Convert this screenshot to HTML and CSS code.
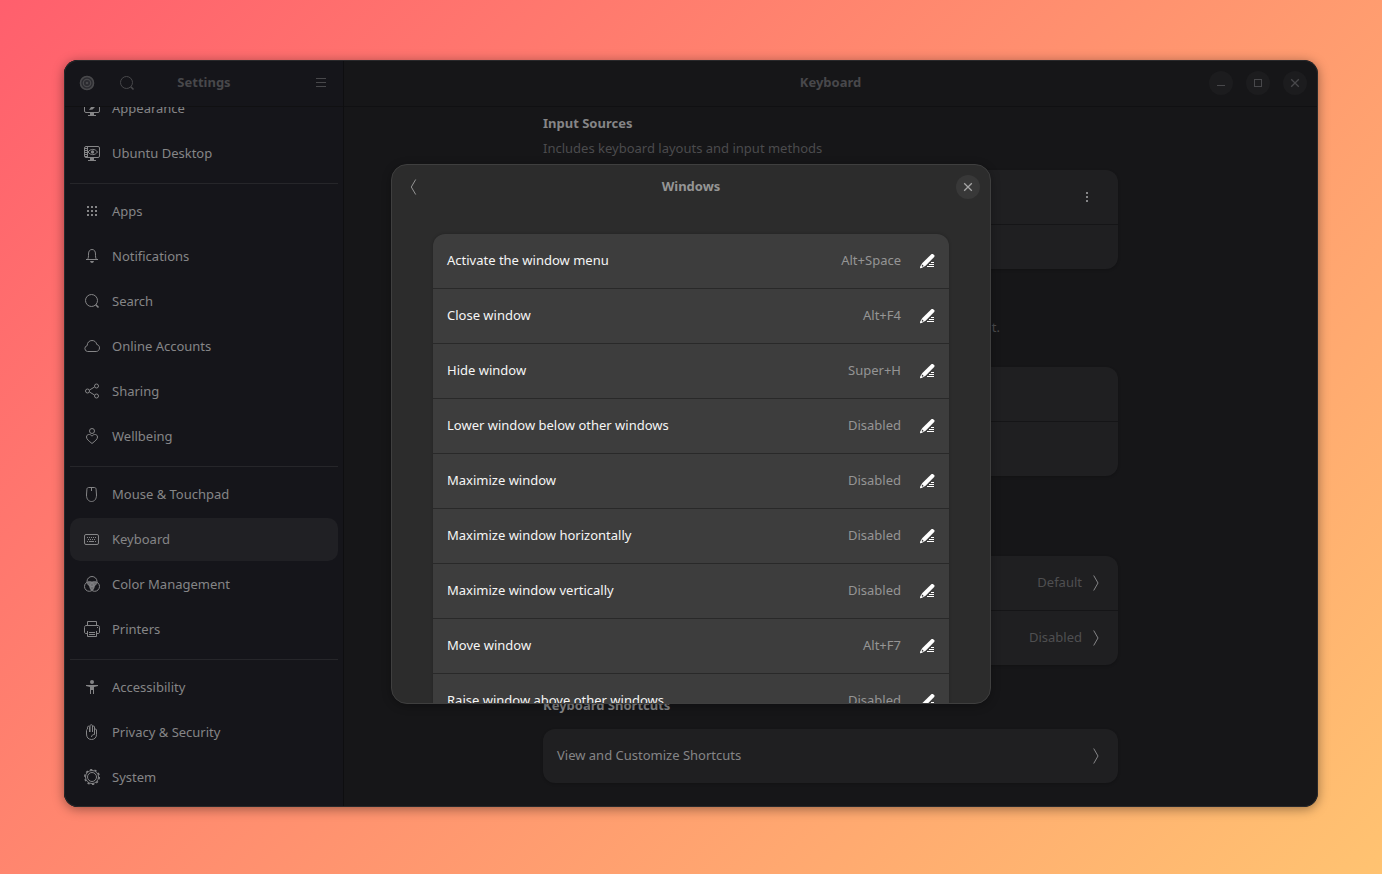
FILE: index.html
```html
<!DOCTYPE html>
<html lang="en">
<head>
<meta charset="utf-8">
<title>Settings</title>
<link rel="stylesheet" href="styles.css">
</head>
<body>
<svg class="defs" aria-hidden="true">
  <symbol id="pencil" viewBox="0 0 16 16">
    <path fill="currentColor" d="M11.600 1h1.400l1.400 1.400v1.400L5.600 12.800 1.600 15 0 15.200l.2-1.600L2.400 10z"/>
    <path d="M2.300 11.500l1.400 1.400-1.400.8-.7-.7z" fill="#3d3d3d"/>
    <path fill="currentColor" d="M11 9h3v1h-3zM9 11h5v1H9zM7 13h7v1H7z"/>
  </symbol>
  <symbol id="next" viewBox="0 0 16 16"><path d="M5.700 .5l4.300 7.500-4.300 7.500" class="thin"/></symbol>
  <symbol id="search" viewBox="0 0 16 16"><circle cx="7.500" cy="7.500" r="6" class="thin"/><path d="M11.800 11.800l2.700 2.700" class="thick"/></symbol>
  <symbol id="close" viewBox="0 0 16 16"><path d="M4.200 4.200l7.600 7.600M11.800 4.200l-7.600 7.600" class="mid"/></symbol>
</svg>

<div class="window">
  <aside class="sidebar">
    <header class="bar side-bar">
      <div class="tools">
        <button class="tool" aria-label="Settings overview"><svg class="icon" viewBox="0 0 16 16"><circle cx="8" cy="8" r="7.200" fill="currentColor" opacity=".45"/><circle cx="8" cy="8" r="6.500" class="ring"/><circle cx="8" cy="8" r="3.700" class="mid"/><circle cx="8" cy="8" r="1.300" fill="currentColor"/></svg></button>
        <button class="tool" aria-label="Search"><svg class="icon"><use href="#search"/></svg></button>
      </div>
      <h1 class="title">Settings</h1>
      <div class="tools end">
        <button class="tool" aria-label="Main menu"><svg class="icon" viewBox="0 0 16 16"><path fill="currentColor" d="M3 3h10v1H3zM3 7h10v1H3zM3 11h10v1H3z"/></svg></button>
      </div>
    </header>
    <nav class="nav">
      <a class="item" href="#"><svg class="icon" viewBox="0 0 16 16"><rect x=".5" y="1.500" width="15" height="11" rx="1.500" class="thin"/><path fill="currentColor" d="M6 13h4v2H6zM4 15h8v1H4zM12 3L7 7l-2 3 3.500-.5L11 7z"/></svg>Appearance</a>
      <a class="item" href="#"><svg class="icon" viewBox="0 0 16 16"><rect x=".5" y="1.500" width="15" height="11" rx="1.500" class="thin"/><path fill="currentColor" d="M6 13h4v2H6zM4 15h8v1H4zM3 2h1v10H3zM1 3h2v1H1zM1 5h2v1H1zM1 7h2v1H1zM1 9h2v1H1zM1 11h2v1H1z"/><path d="M4 7c2.500-3.500 7-3.500 9.500 0-2.500 3.500-7 3.500-9.500 0z" class="thin"/><circle cx="8.500" cy="7" r="1.700" fill="currentColor"/></svg>Ubuntu Desktop</a>
      <hr class="rule">
      <a class="item" href="#"><svg class="icon" viewBox="0 0 16 16"><path fill="currentColor" d="M3 3h2v2H3zM7 3h2v2H7zM11 3h2v2h-2zM3 7h2v2H3zM7 7h2v2H7zM11 7h2v2h-2zM3 11h2v2H3zM7 11h2v2H7zM11 11h2v2h-2z"/></svg>Apps</a>
      <a class="item" href="#"><svg class="icon" viewBox="0 0 16 16"><path d="M2 11.500h12M3.500 11.500c1-1.500 1-3 1-5.500 0-3 1.500-4.500 3.500-4.500s3.500 1.500 3.500 4.500c0 2.500 0 4 1 5.500" class="thin"/><path fill="currentColor" d="M6 13h4c-.4 1.300-1 2-2 2s-1.600-.7-2-2z"/></svg>Notifications</a>
      <a class="item" href="#"><svg class="icon"><use href="#search"/></svg>Search</a>
      <a class="item" href="#"><svg class="icon" viewBox="0 0 16 16"><path d="M3.500 13.500a3 3 0 0 1-.3-5.900C3.200 4.500 5.300 2.500 8 2.500c2.500 0 4.300 1.600 4.800 4 1.700.3 2.700 1.700 2.700 3.400 0 2-1.500 3.600-3.300 3.600z" class="thin"/></svg>Online Accounts</a>
      <a class="item" href="#"><svg class="icon" viewBox="0 0 16 16"><circle cx="3.500" cy="8" r="2" class="thin"/><circle cx="12.500" cy="3" r="2" class="thin"/><circle cx="12.500" cy="13" r="2" class="thin"/><path d="M5.500 7l5-3M5.500 9l5 3" class="thin"/></svg>Sharing</a>
      <a class="item" href="#"><svg class="icon" viewBox="0 0 16 16"><circle cx="8" cy="3" r="2.500" class="thin"/><path d="M8 15.500C5 13 2.500 11.400 2.500 9c0-3 4-3.400 5.500-.8C9.500 5.600 13.500 6 13.500 9c0 2.400-2.500 4-5.500 6.500z" class="thin"/></svg>Wellbeing</a>
      <hr class="rule">
      <a class="item" href="#"><svg class="icon" viewBox="0 0 16 16"><path d="M4.500 1.500h6c1 0 1.500.8 1.600 1.700L12.500 9c0 4-2 6.500-5 6.500s-5-2.500-5-6.500l.4-5.800c.1-.9.600-1.700 1.600-1.700zM7.500 2v3" class="thin"/></svg>Mouse &amp; Touchpad</a>
      <a class="item active" href="#" aria-current="page"><svg class="icon" viewBox="0 0 16 16"><rect x=".5" y="3.500" width="14" height="10" rx="1.500" class="thin"/><path fill="currentColor" d="M3 6h1v1H3zM5 6h1v1H5zM7 6h1v1H7zM9 6h1v1H9zM11 6h1v1h-1zM4 8h1v1H4zM6 8h1v1H6zM8 8h1v1H8zM10 8h1v1h-1zM3 10h1v1H3zM5 10h5v1H5zM11 10h1v1h-1z"/></svg>Keyboard</a>
      <a class="item" href="#"><svg class="icon" viewBox="0 0 16 16"><circle cx="8" cy="5.500" r="5" class="thin"/><circle cx="5.300" cy="10.500" r="4.800" class="thin"/><circle cx="10.700" cy="10.500" r="4.800" class="thin"/><path fill="currentColor" d="M3.300 6C6 5.200 10 5.200 12.700 6c-.3 2-1.500 3.500-2.400 4.500-.1 2-1 3.500-2.300 4.200-1.300-.7-2.200-2.200-2.300-4.200C4.800 9.500 3.600 8 3.300 6z" opacity=".8"/></svg>Color Management</a>
      <a class="item" href="#"><svg class="icon" viewBox="0 0 16 16"><path d="M3.500 4.500v-4h9v4M3 12.500H2C1 12.500.5 12 .5 11V6.500c0-1 .5-2 1.500-2h12c1 0 1.500 1 1.500 2V11c0 1-.5 1.500-1.500 1.500h-1M3.500 10v5.500h9V10" class="thin"/><path fill="currentColor" d="M5 11h6v1H5zM5 13h6v1H5zM13 6h1v1h-1z"/></svg>Printers</a>
      <hr class="rule">
      <a class="item" href="#"><svg class="icon" viewBox="0 0 16 16"><circle cx="8" cy="3" r="2" fill="currentColor"/><path fill="currentColor" d="M2 6h12v1l-4 1v7H9v-4H7v4H6V8L2 7z"/></svg>Accessibility</a>
      <a class="item" href="#"><svg class="icon" viewBox="0 0 16 16"><path d="M5.500 8V3.200c0-1.300-2-1.300-2 0M3.500 3.200V5c-.6.300-1 .7-1 1.500V10c0 3.500 2 5.500 5 5.500s5-2 5-5V6c0-1.300-2-1.300-2 0V3c0-1.300-2-1.300-2 0V1.700c0-1.300-2.500-1.300-2.500 0V8M8.500 8V2.500M10.500 6v4.500c-2 0-3 1-3 2.500" class="thin"/></svg>Privacy &amp; Security</a>
      <a class="item" href="#"><svg class="icon" viewBox="0 0 16 16"><circle cx="8" cy="8" r="6.500" class="thin"/><circle cx="8" cy="8" r="4.500" class="thin"/><circle cx="8" cy="8" r="7.300" fill="none" stroke="currentColor" stroke-width="1.400" stroke-dasharray="2.300 2.290"/></svg>System</a>
    </nav>
  </aside>

  <main class="main">
    <header class="bar main-bar">
      <span></span>
      <h1 class="title">Keyboard</h1>
      <div class="controls">
        <button class="round" aria-label="Minimize"><svg class="icon" viewBox="0 0 16 16"><path fill="currentColor" d="M4 10h8v1H4z"/></svg></button>
        <button class="round" aria-label="Maximize"><svg class="icon" viewBox="0 0 16 16"><rect x="4.500" y="4.500" width="7" height="7" class="thin"/></svg></button>
        <button class="round" aria-label="Close"><svg class="icon"><use href="#close"/></svg></button>
      </div>
    </header>
    <div class="page">
      <section class="group first">
        <h2 class="heading">Input Sources</h2>
        <p class="hint">Includes keyboard layouts and input methods</p>
        <div class="card">
          <div class="row"><button class="more" aria-label="More options"><svg class="icon" viewBox="0 0 16 16"><path fill="currentColor" d="M7 3h2v2H7zM7 7h2v2H7zM7 11h2v2H7z"/></svg></button></div>
          <div class="row short"></div>
        </div>
      </section>
      <section class="group switching">
        <p class="hint tail">t.</p>
        <div class="card"><div class="row"></div><div class="row"></div></div>
      </section>
      <section class="group special">
        <div class="card">
          <div class="row"><span class="value">Default</span><svg class="icon"><use href="#next"/></svg></div>
          <div class="row"><span class="value">Disabled</span><svg class="icon"><use href="#next"/></svg></div>
        </div>
      </section>
      <section class="group shortcuts">
        <h2 class="heading">Keyboard Shortcuts</h2>
        <div class="card"><a class="row" href="#"><span class="label">View and Customize Shortcuts</span><svg class="icon"><use href="#next"/></svg></a></div>
      </section>
    </div>
  </main>

  <div class="overlay">
    <div class="dialog" role="dialog" aria-labelledby="dialog-title">
      <header class="dialog-bar">
        <button class="back" aria-label="Back"><svg class="icon" viewBox="0 0 16 16"><path d="M9.700 .5L5.300 8l4.400 7.500" class="thin"/></svg></button>
        <h2 class="title" id="dialog-title">Windows</h2>
        <button class="round" aria-label="Close dialog"><svg class="icon"><use href="#close"/></svg></button>
      </header>
      <ul class="keys">
        <li class="key"><span class="label">Activate the window menu</span><span class="combo">Alt+Space</span><button class="edit" aria-label="Edit"><svg class="icon"><use href="#pencil"/></svg></button></li>
        <li class="key"><span class="label">Close window</span><span class="combo">Alt+F4</span><button class="edit" aria-label="Edit"><svg class="icon"><use href="#pencil"/></svg></button></li>
        <li class="key"><span class="label">Hide window</span><span class="combo">Super+H</span><button class="edit" aria-label="Edit"><svg class="icon"><use href="#pencil"/></svg></button></li>
        <li class="key"><span class="label">Lower window below other windows</span><span class="combo">Disabled</span><button class="edit" aria-label="Edit"><svg class="icon"><use href="#pencil"/></svg></button></li>
        <li class="key"><span class="label">Maximize window</span><span class="combo">Disabled</span><button class="edit" aria-label="Edit"><svg class="icon"><use href="#pencil"/></svg></button></li>
        <li class="key"><span class="label">Maximize window horizontally</span><span class="combo">Disabled</span><button class="edit" aria-label="Edit"><svg class="icon"><use href="#pencil"/></svg></button></li>
        <li class="key"><span class="label">Maximize window vertically</span><span class="combo">Disabled</span><button class="edit" aria-label="Edit"><svg class="icon"><use href="#pencil"/></svg></button></li>
        <li class="key"><span class="label">Move window</span><span class="combo">Alt+F7</span><button class="edit" aria-label="Edit"><svg class="icon"><use href="#pencil"/></svg></button></li>
        <li class="key"><span class="label">Raise window above other windows</span><span class="combo">Disabled</span><button class="edit" aria-label="Edit"><svg class="icon"><use href="#pencil"/></svg></button></li>
      </ul>
    </div>
  </div>
</div>
</body>
</html>
```
FILE: styles.css
```css
* { box-sizing: border-box; }

body {
  margin: 0;
  height: 100vh;
  padding: 60px 64px 67px;
  background: linear-gradient(135deg, #ff5f6d, #ffc371);
  font: 13px/18px "Noto Sans", sans-serif;
  color: #858587;
}

button {
  display: grid;
  place-items: center;
  padding: 0;
  border: 0;
  background: none;
  color: inherit;
  font: inherit;
}

a { color: inherit; text-decoration: none; }

.defs { display: none; }
.icon { display: block; flex: none; width: 16px; height: 16px; }
.thin { fill: none; stroke: currentColor; stroke-width: 1; }
.mid { fill: none; stroke: currentColor; stroke-width: 1.3; }
.thick, .ring { fill: none; stroke: currentColor; stroke-width: 1.6; }

.window {
  position: relative;
  display: flex;
  height: 100%;
  border-radius: 14px;
  overflow: hidden;
  background: #161618;
  box-shadow: 0 2px 12px rgba(0, 0, 0, .4);
}

.window::after {
  content: "";
  position: absolute;
  inset: 0;
  border-radius: 14px;
  box-shadow: inset 0 0 0 1px #29292b;
  pointer-events: none;
}

.sidebar {
  display: flex;
  flex: none;
  flex-direction: column;
  width: 280px;
  border-right: 1px solid #0e0e10;
  background: #15151a;
}

.bar {
  display: grid;
  flex: none;
  grid-template-columns: 1fr auto 1fr;
  align-items: center;
  height: 47px;
  border-bottom: 1px solid #101012;
  color: #48484b;
}

.side-bar { padding: 0 5px 0 6px; }
.main-bar { padding: 0 10px; }

.title { margin: 0; padding-bottom: 2px; font-size: 13px; font-weight: 700; }

.tools { display: flex; gap: 6px; }
.end { justify-content: flex-end; }
.tool { width: 34px; height: 34px; }

.controls { display: flex; justify-content: flex-end; gap: 13px; }

.round {
  width: 24px;
  height: 24px;
  border-radius: 50%;
  background: #1c1c1e;
}

.nav {
  display: flex;
  flex: 1;
  flex-direction: column;
  justify-content: flex-end;
  gap: 2px;
  min-height: 0;
  padding: 0 5px 8px 6px;
  overflow: hidden;
}

.item {
  display: flex;
  flex: none;
  align-items: center;
  gap: 12px;
  height: 43px;
  padding: 0 14px 1px;
  border-radius: 10px;
}

.active { background: #202024; }

.rule {
  flex: none;
  width: 100%;
  height: 1px;
  margin: 6px 0 4px;
  border: 0;
  background: #26262a;
}

.main {
  display: flex;
  flex: 1;
  flex-direction: column;
  min-width: 0;
  padding-right: 1px;
}

.page {
  flex: 1;
  width: 100%;
  max-width: 575px;
  min-height: 0;
  margin: 0 auto;
}

.first { padding-top: 7px; }
.switching { padding-top: 49px; }
.special { padding-top: 80px; }
.shortcuts { padding-top: 31px; }

.heading { margin: 0; font-size: 13px; font-weight: 700; }
.hint { margin: 7px 0 13px; color: #4b4b4d; }
.tail { margin-bottom: 31px; margin-top: 0; padding-right: 118px; text-align: right; }
.shortcuts .heading { margin-bottom: 15px; }

.card {
  border-radius: 12px;
  background: #1f1f21;
  box-shadow: 0 1px 3px rgba(0, 0, 0, .2);
}

.row {
  display: flex;
  align-items: center;
  justify-content: flex-end;
  gap: 6px;
  height: 54px;
  padding: 0 14px;
}

.row + .row { border-top: 1px solid #151517; height: 55px; }
.row + .short { height: 45px; }
.value { color: #4f4f51; }
.label { margin-right: auto; }
.label, .value, .combo { padding-bottom: 2px; }
.more { width: 34px; height: 34px; }

.overlay {
  position: absolute;
  inset: 0;
  display: grid;
  place-items: center;
}

.dialog {
  width: min(600px, 90%);
  height: min(540px, 90%);
  border: 1px solid #3f3f3f;
  border-radius: 16px;
  overflow: hidden;
  background: #2c2c2c;
  box-shadow: 0 2px 10px rgba(0, 0, 0, .3);
  color: #959595;
}

.dialog-bar {
  display: grid;
  grid-template-columns: 34px 1fr 34px;
  align-items: center;
  height: 44px;
  padding: 0 5px;
  text-align: center;
}

.back { width: 34px; height: 34px; }
.dialog-bar .round { justify-self: center; background: #383838; color: #a5a5a5; }

.keys {
  margin: 25px 41px 0;
  padding: 0;
  border-radius: 12px 12px 0 0;
  background: #3d3d3d;
  box-shadow: 0 0 3px rgba(0, 0, 0, .25);
  list-style: none;
}

.key {
  display: flex;
  align-items: center;
  height: 55px;
  padding: 0 4px 0 14px;
  border-bottom: 1px solid #292929;
}

.key .label { color: #f5f5f5; }
.edit { width: 34px; height: 34px; margin-left: 10px; color: #ffffff; }
```
